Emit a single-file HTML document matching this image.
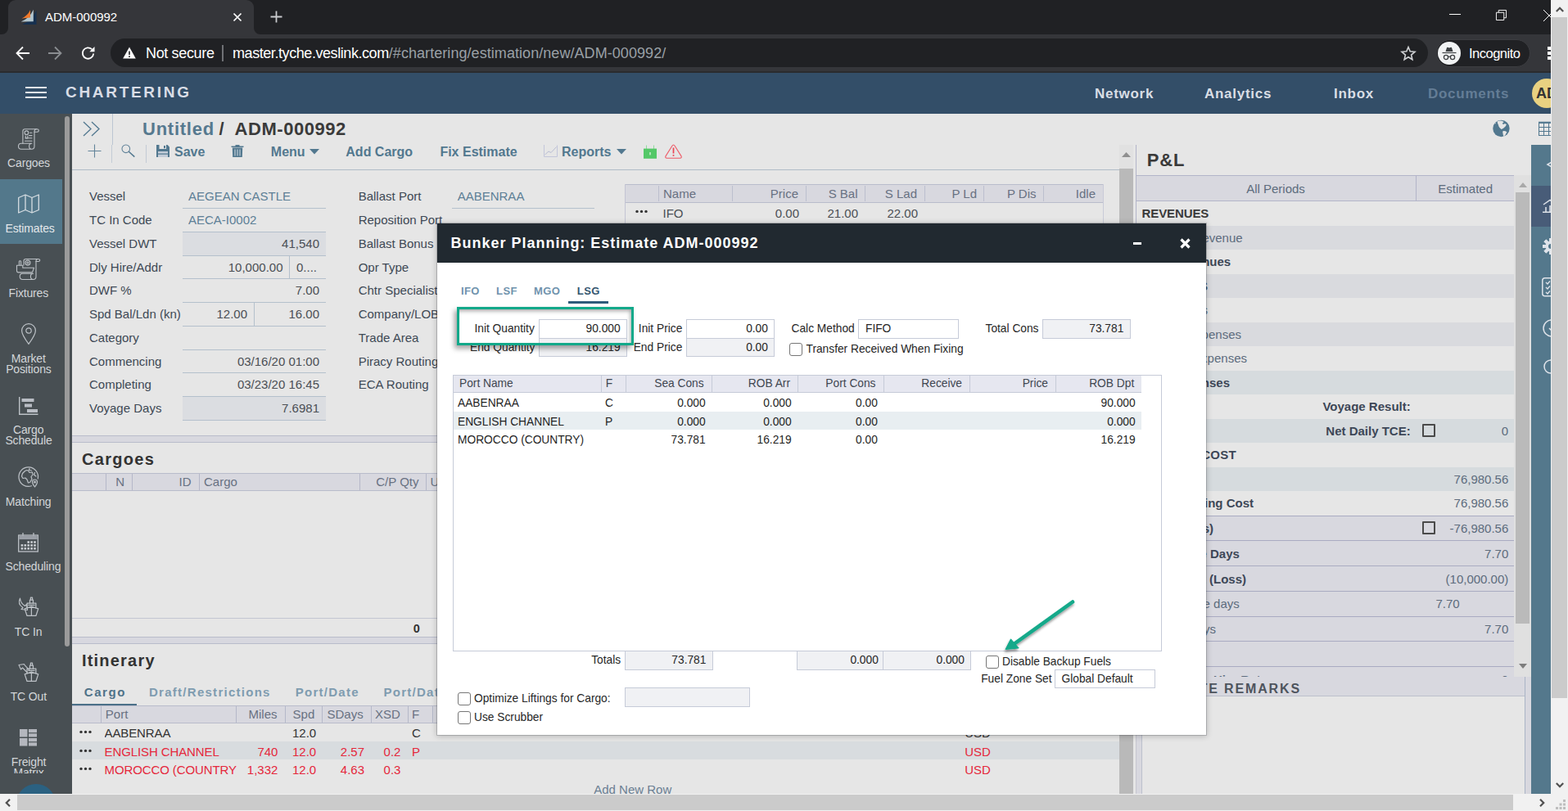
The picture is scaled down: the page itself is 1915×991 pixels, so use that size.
<!DOCTYPE html>
<html><head><meta charset="utf-8"><title>ADM-000992</title>
<style>
*{box-sizing:border-box;margin:0;padding:0}
html,body{width:1915px;height:991px;overflow:hidden;background:#e6e6e6;font-family:"Liberation Sans",Arial,sans-serif;font-size:15px;color:#333}
#root{position:relative;width:1915px;height:991px;overflow:hidden}
.a{position:absolute;white-space:nowrap}
.t{position:absolute;white-space:nowrap;line-height:20px;height:20px}
.r{text-align:right}
.c{text-align:center}
.b{font-weight:bold}
svg{position:absolute;overflow:visible}
/* browser chrome */
#tabbar{left:0;top:0;width:1915px;height:42px;background:#202124}
#tab{left:10px;top:0;width:300px;height:42px;background:#35363a;border-radius:9px 9px 0 0}
#tool{left:0;top:42px;width:1915px;height:46px;background:#35363a}
#toolln{left:0;top:87px;width:1915px;height:2px;background:#2a2b2e}
#url{left:135px;top:47px;width:1609px;height:35px;border-radius:18px;background:#202124}
#incog{left:1754px;top:48px;width:115px;height:34px;border-radius:17px;background:#202124;border:1px solid #3c3d41}
.ch{color:#fff;font-size:18px;letter-spacing:-0.5px}
/* app header */
#hdr{left:0;top:89px;width:1894px;height:50px;background:#334e68}
.nav{color:#d9dee5;font-weight:bold;font-size:17px;letter-spacing:0.72px}
/* sidebar */

.sl{color:#d0d3d6;font-size:14px;text-align:center;width:76px;left:0;line-height:13px;position:absolute;letter-spacing:-0.1px}
.si{stroke:#c4c8cc;fill:none;stroke-width:1.3}
/* main */
.lb{color:#3d4852;font-size:15px}
.ln{position:absolute;height:1px;background:#b9c3ce}
.vl{position:absolute;width:1px;background:#b9c3ce}
.tb{color:#4a6f8c;font-weight:bold;font-size:16px}
.gh{position:absolute;background:#d8d8e0;border-top:1px solid #b9bccd;border-bottom:1px solid #b9bccd}
.red{color:#e0303a}
/* dialog */
#dlg{left:534px;top:273px;width:939px;height:624px;background:#fff;box-shadow:0 1px 6px rgba(0,0,0,.45)}
#dlgh{left:0;top:0;width:939px;height:48px;background:#212930}
.d{font-size:14px;color:#222}
.in{position:absolute;height:23px;border:1px solid #c3c7d6;background:#fff;font-size:14px;line-height:21px;color:#222;padding:0 9px}
.ro{background:#f0f1f4}
.cb{position:absolute;width:15px;height:15px;border:1px solid #6b6b6b;border-radius:3px;background:#fff}
.dh{position:absolute;top:0;height:18px;background:#e6e7f0;border-right:1px solid #c3c7d6;font-size:14px;line-height:17px;color:#444;padding:0 8px}
</style></head><body><div id="root">
<!-- BROWSER CHROME -->
<div class="a" id="tabbar"></div>
<div class="a" id="tab"></div>
<svg style="left:2px;top:34px" width="8" height="8"><path d="M8 0 V8 H0 A8 8 0 0 0 8 0Z" fill="#35363a"/></svg>
<svg style="left:310px;top:34px" width="8" height="8"><path d="M0 0 V8 H8 A8 8 0 0 1 0 0Z" fill="#35363a"/></svg>
<svg style="left:26px;top:11px" width="19" height="20" viewBox="0 0 19 20">
 <path d="M1.100 19 Q13 14 18.500 1.600 V19 Z" fill="#16304f"/>
 <path d="M-0.400 15.600 Q10 11.500 14.800 0.800 V15.200 Z" fill="#b3c5cc"/>
 <path d="M0.400 11.400 Q7.500 8.500 11 1.200 V10.600 Z" fill="#f0792b"/>
</svg>
<div class="t" style="left:55px;top:11px;color:#fff;font-size:15px;letter-spacing:-0.02px">ADM-000992</div>
<svg style="left:284px;top:15px" width="12" height="12" viewBox="0 0 12 12"><path d="M1.5 1.5 L10.5 10.5 M10.5 1.5 L1.5 10.5" stroke="#fff" stroke-width="1.7" fill="none"/></svg>
<svg style="left:330px;top:13px" width="15" height="15" viewBox="0 0 15 15"><path d="M7.5 0.5 V14.5 M0.5 7.5 H14.5" stroke="#c9cbce" stroke-width="1.8" fill="none"/></svg>
<svg style="left:1770px;top:17px" width="14" height="2"><path d="M0 0.5 H14" stroke="#fff" stroke-width="1"/></svg>
<svg style="left:1827px;top:12px" width="13" height="13" viewBox="0 0 14 14"><path d="M0.5 3.5 H10.5 V13.5 H0.5 Z M3.5 3.5 V0.5 H13.5 V10.5 H10.5" stroke="#fff" stroke-width="1" fill="none"/></svg>
<svg style="left:1885px;top:12px" width="14" height="14" viewBox="0 0 14 14"><path d="M0 0 L14 14 M14 0 L0 14" stroke="#fff" stroke-width="1" fill="none"/></svg>
<div class="a" id="tool"></div>
<div class="a" id="toolln"></div>
<svg style="left:19px;top:56px" width="18" height="18" viewBox="0 0 18 18"><path d="M17 9 H2 M9 1.5 L1.5 9 L9 16.5" stroke="#fff" stroke-width="1.8" fill="none"/></svg>
<svg style="left:58px;top:56px" width="18" height="18" viewBox="0 0 18 18"><path d="M1 9 H16 M9 1.5 L16.5 9 L9 16.5" stroke="#8a8d91" stroke-width="1.8" fill="none"/></svg>
<svg style="left:99px;top:56px" width="18" height="18" viewBox="0 0 18 18"><path d="M15.2 9.5 A6.7 6.7 0 1 1 13.2 4.2" stroke="#fff" stroke-width="1.8" fill="none"/><path d="M16.5 1 V7.2 H10.3 Z" fill="#fff"/></svg>
<div class="a" id="url"></div>
<svg style="left:150px;top:57px" width="16" height="15" viewBox="0 0 16 15"><path d="M8 0.5 L15.8 14.5 H0.2 Z" fill="#fff"/><path d="M8 5.5 V10 M8 11.3 V13" stroke="#202124" stroke-width="1.6"/></svg>
<div class="t ch" style="left:178px;top:55px;letter-spacing:-0.35px">Not secure</div>
<div class="a" style="left:271px;top:55px;width:2px;height:20px;background:#6f7175"></div>
<div class="t ch" style="left:284px;top:55px;letter-spacing:-0.43px">master.tyche.veslink.com<span style="color:#9aa0a6;letter-spacing:0.06px">/#chartering/estimation/new/ADM-000992/</span></div>
<svg style="left:1711px;top:56px" width="18" height="18" viewBox="0 0 18 18"><path d="M9 1.5 L11.2 6.8 L17 7.3 L12.6 11.1 L13.9 16.7 L9 13.7 L4.1 16.7 L5.4 11.1 L1 7.3 L6.8 6.8 Z" stroke="#d0d2d5" stroke-width="1.6" fill="none" stroke-linejoin="miter"/></svg>
<div class="a" id="incog"></div>
<div class="a" style="left:1756px;top:51px;width:28px;height:28px;border-radius:14px;background:#f1f3f4"></div>
<svg style="left:1760px;top:57px" width="20" height="18" viewBox="0 0 20 18">
 <path d="M5.5 6 L7 1.2 Q7.3 0.5 8 0.8 L10 1.5 L12 0.8 Q12.7 0.5 13 1.2 L14.5 6 Z" fill="#3c4043"/>
 <path d="M1.5 7.5 H18.500" stroke="#3c4043" stroke-width="1.2"/>
 <circle cx="6" cy="13" r="2.6" stroke="#3c4043" stroke-width="1.3" fill="none"/>
 <circle cx="14" cy="13" r="2.6" stroke="#3c4043" stroke-width="1.3" fill="none"/>
 <path d="M8.6 12.6 Q10 11.8 11.4 12.600" stroke="#3c4043" stroke-width="1.2" fill="none"/>
</svg>
<div class="t" style="left:1794px;top:55px;color:#fff;font-size:16.5px;letter-spacing:-0.5px">Incognito</div>
<div class="a" style="left:1890px;top:57px;width:4px;height:4px;background:#fff;box-shadow:0 6px 0 #fff,0 12px 0 #fff"></div>
<!-- APP HEADER -->
<div class="a" id="hdr"></div>
<div class="a" style="left:31px;top:106px;width:26px;height:2px;background:#e8eaee;box-shadow:0 6px 0 #e8eaee,0 12px 0 #e8eaee"></div>
<div class="t b" style="left:80px;top:103px;color:#d9dde6;font-size:19px;letter-spacing:2.7px">CHARTERING</div>
<div class="t nav" style="left:1337px;top:105px">Network</div>
<div class="t nav" style="left:1471px;top:105px">Analytics</div>
<div class="t nav" style="left:1629px;top:105px">Inbox</div>
<div class="t nav" style="left:1744px;top:105px;color:#647d96">Documents</div>
<div class="a" style="left:1871px;top:96px;width:36px;height:36px;border-radius:18px;background:#e8d181"></div>
<div class="t b" style="left:1876px;top:104px;color:#333;font-size:18px">AD</div>
<!-- SIDEBAR -->
<div class="a" style="left:0px;top:139px;width:88px;height:831px;background:#484f53;"></div>
<div class="a" style="left:0px;top:219px;width:76px;height:79px;background:#53788b;"></div>
<div class="a" style="left:79px;top:142px;width:6px;height:648px;background:#9b9b9b;border-radius:3px;"></div>
<svg style="left:22px;top:157px" width="26" height="26" viewBox="0 0 26 26"><g stroke="#bcc1c6" stroke-width="1.1" fill="none" stroke-linejoin="round" stroke-linecap="round">
<path d="M5.9 18.300 V3.200 Q5.9 0.700 8.400 0.700 H22.800 Q25.300 0.700 25.300 2.600 Q25.300 4.300 23.500 4.300 H20"/>
<path d="M22.800 0.700 Q20 0.700 20 3.500 V21.800 Q20 25.300 16.500 25.300 H3.900 Q0.500 25.300 0.500 21.800 Q0.500 18.300 3.900 18.300 H16.800 Q13.600 18.300 13.600 21.800 Q13.600 25.300 16.800 25.300"/>
<circle cx="10.400" cy="5.200" r="2.300"/><path d="M14.500 5.200 H17 M13.500 8.600 H17 M9 11.800 H17 M8.500 15.300 H17"/><path d="M9.300 9 V12 H11.800 V9"/></g></svg>
<div class="t" style="top:189px;font-size:14px;left:-265px;width:600px;text-align:center;color:#d3d6d9;letter-spacing:-0.15px;">Cargoes</div>
<svg style="left:22px;top:237px" width="26" height="24" viewBox="0 0 26 24"><g stroke="#d6dde2" stroke-width="1.3" fill="none" stroke-linejoin="round"><path d="M0.7 4.5 L9 1 L17 4.5 L25.3 1 V19.5 L17 23 L9 19.5 L0.7 23 Z"/><path d="M9 1 V19.5 M17 4.5 V23"/></g></svg>
<div class="t" style="top:269px;font-size:14px;left:6.5px;color:#e3e7ea;letter-spacing:-0.15px;">Estimates</div>
<svg style="left:20px;top:316px" width="29" height="26" viewBox="0 0 29 26"><g stroke="#bcc1c6" stroke-width="1.1" fill="none" stroke-linejoin="round" stroke-linecap="round">
<path d="M9 8 V3 Q9 0.500 11.500 0.500 H26.300 Q28.700 0.500 28.700 2 Q28.700 3.500 27 3.500 H24"/>
<path d="M26.300 0.500 Q24 0.500 24 3 V22 Q24 25.500 20.500 25.500 H7.600 Q4.200 25.500 4.200 21.800 Q4.200 18.200 7.600 18.200 H20.600 Q17.400 18.200 17.400 21.800 Q17.400 25.500 20.600 25.500"/>
<circle cx="13.900" cy="5.100" r="3"/><circle cx="13.900" cy="5.100" r="1.100"/>
<path d="M3.400 8 V3.200 Q3.400 2.800 4.500 2.800 Q5.600 2.800 5.600 3.400 V8"/><path d="M0.500 8.200 H7.800 V11.300 H21.500 L19.500 16.900 H2.500 Q0.500 16.900 0.500 14.500 Z"/></g></svg>
<div class="t" style="top:348px;font-size:14px;left:-265.2px;width:600px;text-align:center;color:#d3d6d9;letter-spacing:-0.15px;">Fixtures</div>
<svg style="left:26px;top:395px" width="18" height="26" viewBox="0 0 18 26"><g stroke="#bcc1c6" stroke-width="1.2" fill="none"><path d="M9 25.3 Q0.6 14 0.6 9 A8.4 8.4 0 0 1 17.4 9 Q17.4 14 9 25.300 Z"/><circle cx="9" cy="9" r="3.2"/></g></svg>
<div class="t" style="top:428px;font-size:14px;left:-265.3px;width:600px;text-align:center;color:#d3d6d9;letter-spacing:-0.15px;">Market</div>
<div class="t" style="top:441px;font-size:14px;left:-265.1px;width:600px;text-align:center;color:#d3d6d9;letter-spacing:-0.15px;">Positions</div>
<svg style="left:23px;top:485px" width="24" height="22" viewBox="0 0 24 22"><path d="M0.7 0 V21.3 H23.500" stroke="#bcc1c6" stroke-width="1.4" fill="none"/><rect x="3.5" y="2" width="15" height="4" fill="#b9bdc4"/><rect x="7" y="8.5" width="9" height="4" fill="#b9bdc4"/><rect x="10" y="15" width="13" height="4" fill="#b9bdc4"/></svg>
<div class="t" style="top:515px;font-size:14px;left:-265.3px;width:600px;text-align:center;color:#d3d6d9;letter-spacing:-0.15px;">Cargo</div>
<div class="t" style="top:528px;font-size:14px;left:-265px;width:600px;text-align:center;color:#d3d6d9;letter-spacing:-0.15px;">Schedule</div>
<svg style="left:22px;top:571px" width="25" height="25" viewBox="0 0 25 25"><g stroke="#bcc1c6" stroke-width="1.2" fill="none" stroke-linejoin="round" stroke-linecap="round">
<path d="M16.5 22.8 A11.8 11.8 0 1 1 24.300 14"/>
<path d="M8 5 Q10 3 12.5 4 L14 6.5 L17.5 6 L18 9 L16 11.5 L17 14.5 L14.5 18.5 L12.500 19 L11 15 L9 13 L6 13.5 L4.5 11 L5.500 7.500 Z"/>
<path d="M14 1.500 L13.500 3.500 L16.500 4 M20.5 6.5 L19.500 9 L22 11"/>
<path d="M20.5 24 Q17.500 20 17.500 18 A3 3 0 0 1 23.500 18 Q23.5 20 20.500 24 Z"/><circle cx="20.5" cy="18" r="0.9"/></g></svg>
<div class="t" style="top:603px;font-size:14px;left:-265.4px;width:600px;text-align:center;color:#d3d6d9;letter-spacing:-0.15px;">Matching</div>
<svg style="left:22px;top:651px" width="25" height="24" viewBox="0 0 25 24"><g stroke="#bcc1c6" stroke-width="1.3" fill="none"><rect x="0.7" y="3" width="23.600" height="20" /><path d="M6 0 V5.500 M19 0 V5.500"/></g><rect x="1.3" y="3.600" width="22.400" height="4.500" fill="#9a9fa6"/><rect x="11.4" y="10.2" width="2.600" height="2.600" fill="#c9cdd1"/><rect x="15.3" y="10.2" width="2.600" height="2.600" fill="#c9cdd1"/><rect x="19.2" y="10.2" width="2.600" height="2.600" fill="#c9cdd1"/><rect x="3.6" y="14.1" width="2.600" height="2.600" fill="#c9cdd1"/><rect x="7.5" y="14.1" width="2.600" height="2.600" fill="#c9cdd1"/><rect x="11.4" y="14.1" width="2.600" height="2.600" fill="#c9cdd1"/><rect x="15.3" y="14.1" width="2.600" height="2.600" fill="#c9cdd1"/><rect x="19.2" y="14.1" width="2.600" height="2.600" fill="#c9cdd1"/><rect x="3.6" y="18.0" width="2.600" height="2.600" fill="#c9cdd1"/><rect x="7.5" y="18.0" width="2.600" height="2.600" fill="#c9cdd1"/><rect x="11.4" y="18.0" width="2.600" height="2.600" fill="#c9cdd1"/><rect x="15.3" y="18.0" width="2.600" height="2.600" fill="#c9cdd1"/><rect x="19.2" y="18.0" width="2.600" height="2.600" fill="#c9cdd1"/></svg>
<div class="t" style="top:682px;font-size:14px;left:6.5px;color:#d3d6d9;letter-spacing:-0.15px;">Scheduling</div>
<svg style="left:22px;top:730px" width="25" height="24" viewBox="0 0 25 24"><g stroke="#bcc1c6" stroke-width="1.1" fill="none" stroke-linejoin="round" stroke-linecap="round">
<g transform="translate(-3.2,-3.2) scale(1.14)"><path d="M10 15 L12.5 22.500 H22 L24.500 15 L17.2 12.500 Z M17.2 12.5 V22.500"/>
<path d="M12.5 14 V9 H22 V14"/><path d="M15.5 9 V5.500 H19 V9 M16.300 5.500 V3 H18.200 V5.500"/><path d="M14 11 H20.500"/></g><path d="M2.5 1 Q-1 8 6 12.500 L4 14.500 L11.500 15.500 L10.500 8.500 L8.500 10.500 Q3 7 2.500 1 Z"/></g></svg>
<div class="t" style="top:762px;font-size:14px;left:-265.4px;width:600px;text-align:center;color:#d3d6d9;letter-spacing:-0.15px;">TC In</div>
<svg style="left:22px;top:810px" width="25" height="24" viewBox="0 0 25 24"><g stroke="#bcc1c6" stroke-width="1.1" fill="none" stroke-linejoin="round" stroke-linecap="round">
<g transform="translate(-3.2,-3.2) scale(1.14)"><path d="M10 15 L12.5 22.500 H22 L24.500 15 L17.2 12.500 Z M17.2 12.5 V22.500"/>
<path d="M12.5 14 V9 H22 V14"/><path d="M15.5 9 V5.500 H19 V9 M16.300 5.500 V3 H18.200 V5.500"/><path d="M14 11 H20.500"/></g><path d="M11 11.500 L5.500 6 L3.500 8 L1 2.500 L7.500 1.500 L8.500 3.200 L13.500 8.500"/></g></svg>
<div class="t" style="top:841px;font-size:14px;left:-265.2px;width:600px;text-align:center;color:#d3d6d9;letter-spacing:-0.15px;">TC Out</div>
<svg style="left:24px;top:891px" width="21" height="21" viewBox="0 0 21 21"><rect x="0" y="0" width="9.500" height="9.500" fill="#b4b7be"/><rect x="0" y="11" width="9.500" height="9.500" fill="#b4b7be"/><rect x="11" y="0" width="10" height="4.200" fill="#b4b7be"/><rect x="11" y="5.3" width="10" height="4.200" fill="#b4b7be"/><rect x="11" y="11" width="10" height="4.200" fill="#b4b7be"/><rect x="11" y="16.3" width="10" height="4.200" fill="#b4b7be"/></svg>
<div class="t" style="top:921px;font-size:14px;left:-265px;width:600px;text-align:center;color:#d3d6d9;letter-spacing:-0.15px;">Freight</div>
<div class="a" style="left:0;top:939px;width:76px;height:6px;overflow:hidden"><div class="t" style="top:-5px;font-size:14px;left:-265px;width:600px;text-align:center;color:#d3d6d9;letter-spacing:-0.15px;">Matrix</div>
</div>
<div class="a" style="left:20px;top:958px;width:48px;height:12px;overflow:hidden"><div class="a" style="left:0;top:0;width:48px;height:48px;border-radius:24px;background:#2b6181"></div></div>
<!-- MAIN PANEL -->
<svg style="left:101px;top:148px" width="22" height="19" viewBox="0 0 22 19"><path d="M1 1 L10 9.500 L1 18 M11 1 L20 9.500 L11 18" stroke="#52788f" stroke-width="1.3" fill="none"/></svg>
<div class="a" style="left:137px;top:139px;width:1px;height:38px;background:#bcc6d2;"></div>
<div class="t" style="top:148px;font-size:22px;left:174px;color:#56798f;font-weight:bold;letter-spacing:0.75px;word-spacing:-1.3px;">Untitled <span style="color:#3a3a3a">/</span></div>
<div class="t" style="top:148px;font-size:22px;left:286.6px;color:#3a3a3a;font-weight:bold;letter-spacing:0.54px;">ADM-000992</div>
<svg style="left:107px;top:176px" width="17" height="17" viewBox="0 0 17 17"><path d="M8.500 0.500 V16.500 M0.500 8.500 H16.500" stroke="#63849a" stroke-width="1.100" fill="none"/></svg>
<div class="a" style="left:136px;top:177px;width:1px;height:22px;background:#c3cbd5;"></div>
<svg style="left:148px;top:176px" width="18" height="17" viewBox="0 0 18 17"><circle cx="5.800" cy="5.800" r="4.800" stroke="#63849a" stroke-width="1.100" fill="none"/><path d="M9.300 9.300 L16.300 15.600" stroke="#52788f" stroke-width="1.500" fill="none"/></svg>
<div class="a" style="left:178px;top:177px;width:1px;height:22px;background:#c3cbd5;"></div>
<svg style="left:191px;top:177px" width="16" height="15" viewBox="0 0 16 15"><path d="M0 0 H13.500 L16 2.500 V15 H0 Z" fill="#52788f"/><rect x="3.500" y="0" width="8.500" height="5" fill="#e6e6e6"/><rect x="9" y="1" width="2" height="3.200" fill="#52788f"/><rect x="2" y="8" width="12" height="7" fill="#c3ccd8"/><rect x="2" y="10.500" width="12" height="1.200" fill="#52788f"/></svg>
<div class="t" style="top:176px;font-size:16px;left:213px;color:#52788f;font-weight:bold;">Save</div>
<svg style="left:282px;top:177px" width="16" height="15" viewBox="0 0 16 15"><path d="M0.500 1.500 H15.500 V3 H0.500 Z M5.500 0 H10.500 V1.500 H5.500 Z M1.800 3.500 H14.200 L13.800 15 H2.200 Z" fill="#52788f"/><path d="M5 5.500 V13.500 M8 5.500 V13.500 M11 5.500 V13.500" stroke="#d5dde5" stroke-width="1"/></svg>
<div class="t" style="top:176px;font-size:16px;left:330.8px;color:#52788f;font-weight:bold;">Menu</div>
<svg style="left:378px;top:182px" width="12" height="7" viewBox="0 0 12 7"><path d="M0 0 H12 L6 6.500 Z" fill="#52788f"/></svg>
<div class="t" style="top:176px;font-size:16px;left:422.3px;color:#52788f;font-weight:bold;">Add Cargo</div>
<div class="t" style="top:176px;font-size:16px;left:537.4px;color:#52788f;font-weight:bold;">Fix Estimate</div>
<svg style="left:664px;top:177px" width="17" height="15" viewBox="0 0 17 15"><path d="M0.500 0 V14.500 H16.500 V0.500" stroke="#c3c6da" stroke-width="1" fill="none"/><path d="M1.500 12 L6 8 L9 9.500 L15.500 2.500" stroke="#b9bdd3" stroke-width="1" fill="none"/></svg>
<div class="t" style="top:176px;font-size:16px;left:686px;color:#52788f;font-weight:bold;">Reports</div>
<svg style="left:753px;top:182px" width="12" height="7" viewBox="0 0 12 7"><path d="M0 0 H12 L6 6.500 Z" fill="#52788f"/></svg>
<svg style="left:786px;top:176px" width="16" height="18" viewBox="0 0 16 18"><path d="M3.500 6 V1.500 M12.500 6 V1.500" stroke="#8fdc9c" stroke-width="1" fill="none"/><rect x="0" y="5.600" width="16" height="12.200" fill="#54c868"/><rect x="7.300" y="10" width="1.400" height="3.400" fill="#d3f0d8"/></svg>
<svg style="left:812px;top:176px" width="21" height="18" viewBox="0 0 21 18"><path d="M8.900 2.200 Q10.500 -0.300 12.100 2.200 L19.900 14.600 Q21.200 17.200 18.400 17.200 H2.600 Q-0.200 17.200 1.100 14.600 Z" stroke="#ee5a67" stroke-width="1.100" fill="none" stroke-linejoin="round"/><path d="M10.500 4.500 V11.500 M10.500 13 V14.800" stroke="#ea4655" stroke-width="1.700"/></svg>
<div class="a" style="left:88px;top:207px;width:1279px;height:1px;background:#b0bcc8;"></div>
<svg style="left:1823px;top:147px" width="21" height="21" viewBox="0 0 21 21"><circle cx="10.450" cy="10" r="10.200" fill="#52788f"/><path d="M5.600 1.200 Q6 4 6.900 5.600 Q7.300 7.800 8.500 9 L10.600 11 L12.200 10.200 L13.700 9.300 L15.800 7.200 L16.900 5.100 L14.800 4.100 L13.200 5.100 L11.600 4.100 L13.700 2 Q10 -0.500 5.600 1.200 Z" fill="#e6e6e6"/><path d="M12.700 13 Q15 12.600 17.400 14.200 L15.800 17.200 L13.600 19.900 L12.700 17.200 L12.200 14.600 Z" fill="#e6e6e6"/><path d="M2.600 3.600 L3.400 4.600 L4.200 3.200 Z" fill="#e6e6e6"/></svg>
<svg style="left:1879px;top:148px" width="17" height="19" viewBox="0 0 17 19"><rect x="0" y="0.700" width="17" height="2.200" fill="#52788f"/><g stroke="#52788f" stroke-width="1" fill="none"><path d="M0.500 1 V18 M6.500 1 V18 M12.500 1 V18 M0 7.500 H17 M0 12.500 H17 M0 17.500 H17"/></g></svg>
<div class="t" style="top:230px;font-size:15px;left:109px;color:#3e4955;letter-spacing:0px;">Vessel</div>
<div class="t" style="top:259px;font-size:15px;left:109px;color:#3e4955;letter-spacing:0px;">TC In Code</div>
<div class="t" style="top:288px;font-size:15px;left:109px;color:#3e4955;letter-spacing:0px;">Vessel DWT</div>
<div class="t" style="top:317px;font-size:15px;left:109px;color:#3e4955;letter-spacing:0px;">Dly Hire/Addr</div>
<div class="t" style="top:345px;font-size:15px;left:109px;color:#3e4955;letter-spacing:0px;">DWF %</div>
<div class="t" style="top:374px;font-size:15px;left:109px;color:#3e4955;letter-spacing:0px;">Spd Bal/Ldn (kn)</div>
<div class="t" style="top:403px;font-size:15px;left:109px;color:#3e4955;letter-spacing:0px;">Category</div>
<div class="t" style="top:432px;font-size:15px;left:109px;color:#3e4955;letter-spacing:0px;">Commencing</div>
<div class="t" style="top:460px;font-size:15px;left:109px;color:#3e4955;letter-spacing:0px;">Completing</div>
<div class="t" style="top:489px;font-size:15px;left:109px;color:#3e4955;letter-spacing:0px;">Voyage Days</div>
<div class="a" style="left:223px;top:284px;width:175px;height:28px;background:#dbdde1;"></div>
<div class="a" style="left:223px;top:485px;width:175px;height:28px;background:#dbdde1;"></div>
<div class="a" style="left:223px;top:254px;width:175px;height:1px;background:#b4c0cc;"></div>
<div class="a" style="left:223px;top:283px;width:175px;height:1px;background:#b4c0cc;"></div>
<div class="a" style="left:223px;top:312px;width:175px;height:1px;background:#b4c0cc;"></div>
<div class="a" style="left:223px;top:340px;width:175px;height:1px;background:#b4c0cc;"></div>
<div class="a" style="left:223px;top:369px;width:175px;height:1px;background:#b4c0cc;"></div>
<div class="a" style="left:223px;top:398px;width:175px;height:1px;background:#b4c0cc;"></div>
<div class="a" style="left:223px;top:427px;width:175px;height:1px;background:#b4c0cc;"></div>
<div class="a" style="left:223px;top:455px;width:175px;height:1px;background:#b4c0cc;"></div>
<div class="a" style="left:223px;top:484px;width:175px;height:1px;background:#b4c0cc;"></div>
<div class="a" style="left:223px;top:513px;width:175px;height:1px;background:#b4c0cc;"></div>
<div class="t" style="top:230px;font-size:15px;left:230px;color:#5d7f96;letter-spacing:0px;">AEGEAN CASTLE</div>
<div class="t" style="top:259px;font-size:15px;left:230px;color:#5d7f96;letter-spacing:0px;">AECA-I0002</div>
<div class="t" style="top:288px;font-size:15px;right:1525px;color:#4b4f55;">41,540</div>
<div class="t" style="top:317px;font-size:15px;right:1569.5px;color:#4b4f55;">10,000.00</div>
<div class="a" style="left:353px;top:313px;width:1px;height:27px;background:#b4c0cc;"></div>
<div class="t" style="top:317px;font-size:15px;left:362px;color:#4b4f55;">0....</div>
<div class="t" style="top:345px;font-size:15px;right:1525px;color:#4b4f55;">7.00</div>
<div class="t" style="top:374px;font-size:15px;right:1613px;color:#4b4f55;">12.00</div>
<div class="a" style="left:310px;top:370px;width:1px;height:28px;background:#b4c0cc;"></div>
<div class="t" style="top:374px;font-size:15px;right:1525px;color:#4b4f55;">16.00</div>
<div class="t" style="top:432px;font-size:15px;right:1525px;color:#4b4f55;">03/16/20 01:00</div>
<div class="t" style="top:460px;font-size:15px;right:1525px;color:#4b4f55;">03/23/20 16:45</div>
<div class="t" style="top:489px;font-size:15px;right:1525px;color:#4b4f55;">7.6981</div>
<div class="t" style="top:230px;font-size:15px;left:437.7px;color:#3e4955;letter-spacing:0px;">Ballast Port</div>
<div class="t" style="top:259px;font-size:15px;left:437.7px;color:#3e4955;letter-spacing:0px;">Reposition Port</div>
<div class="t" style="top:288px;font-size:15px;left:437.7px;color:#3e4955;letter-spacing:0px;">Ballast Bonus</div>
<div class="t" style="top:317px;font-size:15px;left:437.7px;color:#3e4955;letter-spacing:0px;">Opr Type</div>
<div class="t" style="top:345px;font-size:15px;left:437.7px;color:#3e4955;letter-spacing:0px;">Chtr Specialist</div>
<div class="t" style="top:374px;font-size:15px;left:437.7px;color:#3e4955;letter-spacing:0px;">Company/LOB</div>
<div class="t" style="top:403px;font-size:15px;left:437.7px;color:#3e4955;letter-spacing:0px;">Trade Area</div>
<div class="t" style="top:432px;font-size:15px;left:437.7px;color:#3e4955;letter-spacing:0px;">Piracy Routing</div>
<div class="t" style="top:460px;font-size:15px;left:437.7px;color:#3e4955;letter-spacing:0px;">ECA Routing</div>
<div class="t" style="top:230px;font-size:15px;left:558.7px;color:#5d7f96;letter-spacing:0px;">AABENRAA</div>
<div class="a" style="left:552px;top:254px;width:174px;height:1px;background:#b4c0cc;"></div>
<div class="a" style="left:552px;top:283px;width:174px;height:1px;background:#b4c0cc;"></div>
<div class="a" style="left:552px;top:312px;width:174px;height:1px;background:#b4c0cc;"></div>
<div class="a" style="left:552px;top:340px;width:174px;height:1px;background:#b4c0cc;"></div>
<div class="a" style="left:552px;top:369px;width:174px;height:1px;background:#b4c0cc;"></div>
<div class="a" style="left:552px;top:398px;width:174px;height:1px;background:#b4c0cc;"></div>
<div class="a" style="left:552px;top:427px;width:174px;height:1px;background:#b4c0cc;"></div>
<div class="a" style="left:552px;top:455px;width:174px;height:1px;background:#b4c0cc;"></div>
<div class="a" style="left:552px;top:484px;width:174px;height:1px;background:#b4c0cc;"></div>
<div class="a" style="left:764px;top:225px;width:583px;height:23px;background:#d8d8df;border-top:1px solid #b9bccb;border-bottom:1px solid #b9bccb;"></div>
<div class="a" style="left:763px;top:225px;width:1px;height:60px;background:#c3c5d3;"></div>
<div class="a" style="left:1347px;top:225px;width:1px;height:60px;background:#c9cbd8;"></div>
<div class="a" style="left:804px;top:227px;width:1px;height:19px;background:#bcbfce;"></div>
<div class="a" style="left:894px;top:227px;width:1px;height:19px;background:#bcbfce;"></div>
<div class="a" style="left:984px;top:227px;width:1px;height:19px;background:#bcbfce;"></div>
<div class="a" style="left:1056px;top:227px;width:1px;height:19px;background:#bcbfce;"></div>
<div class="a" style="left:1129px;top:227px;width:1px;height:19px;background:#bcbfce;"></div>
<div class="a" style="left:1201px;top:227px;width:1px;height:19px;background:#bcbfce;"></div>
<div class="a" style="left:1274px;top:227px;width:1px;height:19px;background:#bcbfce;"></div>
<div class="t" style="top:227px;font-size:15px;left:810px;color:#687182;">Name</div>
<div class="t" style="top:227px;font-size:15px;right:940px;color:#687182;">Price</div>
<div class="t" style="top:227px;font-size:15px;right:867.5px;color:#687182;">S Bal</div>
<div class="t" style="top:227px;font-size:15px;right:795px;color:#687182;">S Lad</div>
<div class="t" style="top:227px;font-size:15px;right:722px;color:#687182;">P Ld</div>
<div class="t" style="top:227px;font-size:15px;right:649.5px;color:#687182;">P Dis</div>
<div class="t" style="top:227px;font-size:15px;right:577px;color:#687182;">Idle</div>
<svg style="left:776px;top:256px" width="15" height="5" viewBox="0 0 15 5"><circle cx="2" cy="2.400" r="1.700" fill="#333"/><circle cx="7.500" cy="2.400" r="1.700" fill="#333"/><circle cx="13" cy="2.400" r="1.700" fill="#333"/></svg>
<div class="t" style="top:251px;font-size:15px;left:809.5px;color:#4b4f55;">IFO</div>
<div class="t" style="top:251px;font-size:15px;right:939px;color:#4b4f55;">0.00</div>
<div class="t" style="top:251px;font-size:15px;right:867px;color:#4b4f55;">21.00</div>
<div class="t" style="top:251px;font-size:15px;right:794px;color:#4b4f55;">22.00</div>
<div class="a" style="left:1367px;top:177px;width:17px;height:793px;background:#e1e1e1;"></div>
<div class="a" style="left:1367px;top:206px;width:17px;height:764px;background:#b9b9b9;"></div>
<svg style="left:1370px;top:186px" width="11" height="6" viewBox="0 0 11 6"><path d="M0 6 L5.500 0 L11 6 Z" fill="#8f8f8f"/></svg>
<div class="a" style="left:1385px;top:177px;width:3px;height:793px;background:#e6e6e6;"></div>
<div class="a" style="left:88px;top:532px;width:1279px;height:9px;background:#d8d8df;border-top:1px solid #b9bccb;border-bottom:1px solid #b9bccb;"></div>
<div class="t" style="top:551px;font-size:20px;left:100px;color:#333;font-weight:bold;letter-spacing:1.3px;">Cargoes</div>
<div class="a" style="left:88px;top:578px;width:1279px;height:22px;background:#d8d8df;border-top:1px solid #b9bccb;border-bottom:1px solid #b9bccb;"></div>
<div class="a" style="left:129px;top:579px;width:1px;height:20px;background:#b5b8c9;"></div>
<div class="a" style="left:161px;top:579px;width:1px;height:20px;background:#b5b8c9;"></div>
<div class="a" style="left:243px;top:579px;width:1px;height:20px;background:#b5b8c9;"></div>
<div class="a" style="left:439px;top:579px;width:1px;height:20px;background:#b5b8c9;"></div>
<div class="a" style="left:520px;top:579px;width:1px;height:20px;background:#b5b8c9;"></div>
<div class="t" style="top:579px;font-size:15px;left:-153.4px;width:600px;text-align:center;color:#687182;">N</div>
<div class="t" style="top:579px;font-size:15px;right:1681.5px;color:#687182;">ID</div>
<div class="t" style="top:579px;font-size:15px;left:249px;color:#687182;">Cargo</div>
<div class="t" style="top:579px;font-size:15px;right:1403.5px;color:#687182;">C/P Qty</div>
<div class="t" style="top:579px;font-size:15px;left:525.5px;color:#687182;">U</div>
<div class="a" style="left:88px;top:755px;width:1279px;height:1px;background:#c3c6d2;"></div>
<div class="t" style="top:758px;font-size:14.5px;right:1402.3px;color:#333;font-weight:bold;">0</div>
<div class="a" style="left:88px;top:778px;width:1279px;height:9px;background:#d8d8df;border-top:1px solid #b9bccb;border-bottom:1px solid #b9bccb;"></div>
<div class="t" style="top:797px;font-size:20px;left:100px;color:#333;font-weight:bold;letter-spacing:1.2px;">Itinerary</div>
<div class="t" style="top:836px;font-size:15px;left:102.8px;color:#4f7289;font-weight:bold;letter-spacing:1.55px;">Cargo</div>
<div class="t" style="top:836px;font-size:15px;left:182px;color:#7f9cb0;font-weight:bold;letter-spacing:1.27px;">Draft/Restrictions</div>
<div class="t" style="top:836px;font-size:15px;left:360.8px;color:#7f9cb0;font-weight:bold;letter-spacing:1.25px;">Port/Date</div>
<div class="t" style="top:836px;font-size:15px;left:468.6px;color:#7f9cb0;font-weight:bold;letter-spacing:1.25px;">Port/Date</div>
<div class="a" style="left:88px;top:860px;width:79px;height:2px;background:#4b7088;"></div>
<div class="a" style="left:88px;top:862px;width:1279px;height:22px;background:#d8d8df;border-top:1px solid #b9bccb;border-bottom:1px solid #b9bccb;"></div>
<div class="a" style="left:123px;top:863px;width:1px;height:20px;background:#b5b8c9;"></div>
<div class="a" style="left:288px;top:863px;width:1px;height:20px;background:#b5b8c9;"></div>
<div class="a" style="left:348px;top:863px;width:1px;height:20px;background:#b5b8c9;"></div>
<div class="a" style="left:393px;top:863px;width:1px;height:20px;background:#b5b8c9;"></div>
<div class="a" style="left:453px;top:863px;width:1px;height:20px;background:#b5b8c9;"></div>
<div class="a" style="left:498px;top:863px;width:1px;height:20px;background:#b5b8c9;"></div>
<div class="a" style="left:528px;top:863px;width:1px;height:20px;background:#b5b8c9;"></div>
<div class="t" style="top:863px;font-size:15px;left:128.8px;color:#687182;">Port</div>
<div class="t" style="top:863px;font-size:15px;right:1576.5px;color:#687182;">Miles</div>
<div class="t" style="top:863px;font-size:15px;left:357.6px;color:#687182;">Spd</div>
<div class="t" style="top:863px;font-size:15px;left:399.5px;color:#687182;">SDays</div>
<div class="t" style="top:863px;font-size:15px;left:458px;color:#687182;">XSD</div>
<div class="t" style="top:863px;font-size:15px;left:503px;color:#687182;">F</div>
<div class="a" style="left:88px;top:906px;width:1279px;height:22px;background:#d8dcdf;"></div>
<svg style="left:97px;top:892px" width="15" height="5" viewBox="0 0 15 5"><circle cx="2" cy="2.400" r="1.700" fill="#333"/><circle cx="7.500" cy="2.400" r="1.700" fill="#333"/><circle cx="13" cy="2.400" r="1.700" fill="#333"/></svg>
<div class="a" style="left:127.500px;top:884px;width:161px;height:24px;overflow:hidden"><div class="t" style="top:2px;font-size:15px;left:0px;color:#333;letter-spacing:-0.1px;">AABENRAA</div>
</div>
<div class="t" style="top:886px;font-size:15px;left:357px;color:#333;">12.0</div>
<div class="t" style="top:886px;font-size:15px;left:503px;color:#333;">C</div>
<div class="t" style="top:886px;font-size:15px;left:1178.2px;color:#333;">USD</div>
<svg style="left:97px;top:915px" width="15" height="5" viewBox="0 0 15 5"><circle cx="2" cy="2.400" r="1.700" fill="#333"/><circle cx="7.500" cy="2.400" r="1.700" fill="#333"/><circle cx="13" cy="2.400" r="1.700" fill="#333"/></svg>
<div class="a" style="left:127.500px;top:907px;width:161px;height:24px;overflow:hidden"><div class="t" style="top:2px;font-size:15px;left:0px;color:#e5283c;letter-spacing:-0.1px;">ENGLISH CHANNEL</div>
</div>
<div class="t" style="top:909px;font-size:15px;right:1575.6px;color:#e5283c;">740</div>
<div class="t" style="top:909px;font-size:15px;left:357px;color:#e5283c;">12.0</div>
<div class="t" style="top:909px;font-size:15px;right:1470px;color:#e5283c;">2.57</div>
<div class="t" style="top:909px;font-size:15px;right:1425.6px;color:#e5283c;">0.2</div>
<div class="t" style="top:909px;font-size:15px;left:503px;color:#e5283c;">P</div>
<div class="t" style="top:909px;font-size:15px;left:1178.2px;color:#e5283c;">USD</div>
<svg style="left:97px;top:937px" width="15" height="5" viewBox="0 0 15 5"><circle cx="2" cy="2.400" r="1.700" fill="#333"/><circle cx="7.500" cy="2.400" r="1.700" fill="#333"/><circle cx="13" cy="2.400" r="1.700" fill="#333"/></svg>
<div class="a" style="left:127.500px;top:929px;width:161px;height:24px;overflow:hidden"><div class="t" style="top:2px;font-size:15px;left:0px;color:#e5283c;letter-spacing:-0.1px;">MOROCCO (COUNTRY)</div>
</div>
<div class="t" style="top:931px;font-size:15px;right:1575.6px;color:#e5283c;">1,332</div>
<div class="t" style="top:931px;font-size:15px;left:357px;color:#e5283c;">12.0</div>
<div class="t" style="top:931px;font-size:15px;right:1470px;color:#e5283c;">4.63</div>
<div class="t" style="top:931px;font-size:15px;right:1425.6px;color:#e5283c;">0.3</div>
<div class="t" style="top:931px;font-size:15px;left:1178.2px;color:#e5283c;">USD</div>
<div class="t" style="top:955px;font-size:15px;left:725.2px;color:#6b7f93;">Add New Row</div>
<!-- P&L PANEL -->
<div class="a" style="left:1387px;top:177px;width:1px;height:650px;background:#b3b5c9;"></div>
<div class="a" style="left:1387px;top:827px;width:1px;height:143px;background:#c6c6cf;"></div>
<div class="t" style="top:186px;font-size:22px;left:1400.7px;color:#3a3a3a;font-weight:bold;letter-spacing:0.9px;">P&amp;L</div>
<div class="a" style="left:1388px;top:214px;width:461px;height:32px;background:#d8d8df;border-top:1px solid #b3b5c9;border-bottom:1px solid #b3b5c9;"></div>
<div class="a" style="left:1729px;top:215px;width:1px;height:30px;background:#b3b5c9;"></div>
<div class="t" style="top:221px;font-size:15px;left:1258px;width:600px;text-align:center;color:#5d6c7d;">All Periods</div>
<div class="t" style="top:221px;font-size:15px;left:1489.7px;width:600px;text-align:center;color:#5d6c7d;">Estimated</div>
<div class="t" style="top:251px;font-size:15px;left:1394.5px;color:#3a3a3a;font-weight:bold;letter-spacing:-0.1px;">REVENUES</div>
<div class="a" style="left:1388px;top:276px;width:461px;height:29px;background:#d9dade;"></div>
<div class="a" style="left:1388px;top:335px;width:461px;height:29px;background:#d9dade;"></div>
<div class="a" style="left:1388px;top:394px;width:461px;height:29px;background:#d9dade;"></div>
<div class="a" style="left:1388px;top:453px;width:461px;height:29px;background:#d6dbde;"></div>
<div class="a" style="left:1388px;top:512px;width:461px;height:29px;background:#d6dbde;"></div>
<div class="a" style="left:1388px;top:571px;width:461px;height:29px;background:#d6dbde;"></div>
<div class="t" style="top:281px;font-size:15px;right:397.4px;color:#5d6c7d;">Freight Revenue</div>
<div class="t" style="top:310px;font-size:15px;right:411.8px;color:#3d4757;font-weight:bold;">Total Revenues</div>
<div class="t" style="top:340px;font-size:15px;right:440px;color:#3d4757;font-weight:bold;">EXPENSES</div>
<div class="t" style="top:369px;font-size:15px;right:440px;color:#5d6c7d;">Bunkers</div>
<div class="t" style="top:399px;font-size:15px;right:399px;color:#5d6c7d;">Port Expenses</div>
<div class="t" style="top:428px;font-size:15px;right:392px;color:#5d6c7d;">Misc. Expenses</div>
<div class="t" style="top:458px;font-size:15px;right:413px;color:#3d4757;font-weight:bold;">Total Expenses</div>
<div class="t" style="top:487px;font-size:15px;right:192.3px;color:#3d4757;font-weight:bold;">Voyage Result:</div>
<div class="t" style="top:517px;font-size:15px;right:192.3px;color:#3d4757;font-weight:bold;">Net Daily TCE:</div>
<div class="t" style="top:546px;font-size:15px;right:405px;color:#3d4757;font-weight:bold;letter-spacing:0.3px;">RUNNING COST</div>
<div class="t" style="top:605px;font-size:15px;right:384px;color:#3d4757;font-weight:bold;">Total Running Cost</div>
<div class="a" style="left:1737px;top:518px;width:16px;height:16px;border:2px solid #4a4a4a;border-radius:1px;"></div>
<div class="t" style="top:517px;font-size:15px;right:72.8px;color:#5d6c7d;">0</div>
<div class="t" style="top:576px;font-size:15px;right:72.7px;color:#5d6c7d;">76,980.56</div>
<div class="t" style="top:605px;font-size:15px;right:72.7px;color:#5d6c7d;">76,980.56</div>
<div class="a" style="left:1388px;top:630px;width:461px;height:197px;background:#d8d8df;"></div>
<div class="a" style="left:1388px;top:630px;width:461px;height:1px;background:#a9abc2;"></div>
<div class="a" style="left:1388px;top:660px;width:461px;height:1px;background:#a9abc2;"></div>
<div class="a" style="left:1388px;top:691px;width:461px;height:1px;background:#a9abc2;"></div>
<div class="a" style="left:1388px;top:722px;width:461px;height:1px;background:#a9abc2;"></div>
<div class="a" style="left:1388px;top:753px;width:461px;height:1px;background:#a9abc2;"></div>
<div class="a" style="left:1388px;top:783px;width:461px;height:1px;background:#a9abc2;"></div>
<div class="a" style="left:1388px;top:814px;width:461px;height:1px;background:#a9abc2;"></div>
<div class="t" style="top:636px;font-size:15px;right:433px;color:#3d4757;font-weight:bold;">Profit (Loss)</div>
<div class="a" style="left:1737px;top:637px;width:16px;height:16px;border:2px solid #4a4a4a;border-radius:1px;"></div>
<div class="t" style="top:636px;font-size:15px;right:72.7px;color:#5d6c7d;">-76,980.56</div>
<div class="t" style="top:667px;font-size:15px;right:401.2px;color:#3d4757;font-weight:bold;">Total Voyage Days</div>
<div class="t" style="top:667px;font-size:15px;right:72.7px;color:#5d6c7d;">7.70</div>
<div class="t" style="top:698px;font-size:15px;right:393px;color:#3d4757;font-weight:bold;">Daily Profit (Loss)</div>
<div class="t" style="top:698px;font-size:15px;right:72.7px;color:#5d6c7d;">(10,000.00)</div>
<div class="t" style="top:728px;font-size:15px;right:401.2px;color:#5d6c7d;">Breakeven Voyage days</div>
<div class="t" style="top:728px;font-size:15px;right:132.3px;color:#5d6c7d;">7.70</div>
<div class="t" style="top:759px;font-size:15px;right:430px;color:#5d6c7d;">Voyage Days</div>
<div class="t" style="top:759px;font-size:15px;right:72.7px;color:#5d6c7d;">7.70</div>
<div class="a" style="left:1388px;top:815px;width:461px;height:11.500px;overflow:hidden"><div class="t" style="top:6px;font-size:15px;left:94px;color:#5d6c7d;font-weight:bold">Hire Rate</div><div class="t" style="top:6px;font-size:15px;right:7px;color:#5d6c7d">0</div></div>
<div class="a" style="left:1849px;top:214px;width:21px;height:613px;background:#e0e0e0;"></div>
<div class="a" style="left:1851px;top:235px;width:17px;height:527px;background:#bababa;"></div>
<svg style="left:1855px;top:223px" width="10" height="6" viewBox="0 0 10 6"><path d="M0 6 L5 0 L10 6 Z" fill="#a9a9a9"/></svg>
<svg style="left:1855px;top:811px" width="10" height="6" viewBox="0 0 10 6"><path d="M0 0 L5 6 L10 0 Z" fill="#7d7d7d"/></svg>
<div class="a" style="left:1388px;top:827px;width:482px;height:143px;background:#d8d8df;"></div>
<div class="t" style="top:832px;font-size:16px;right:326px;color:#4e545d;font-weight:bold;letter-spacing:1.87px;">ESTIMATE REMARKS</div>
<div class="a" style="left:1394px;top:850px;width:469px;height:125px;background:#e6e6e6;border:1px solid #bcc0cc;"></div>
<div class="a" style="left:1862px;top:827px;width:1px;height:143px;background:#aab4c6;"></div>
<div class="a" style="left:1870px;top:177px;width:24px;height:793px;background:#54788c;"></div>
<div class="a" style="left:1870px;top:227px;width:24px;height:50px;background:#485c78;"></div>
<div class="a" style="left:1870px;top:177px;width:24px;height:793px;overflow:hidden"><svg style="left:19px;top:17px" width="12" height="14" viewBox="0 0 12 14"><path d="M11 1 L1 7 L11 13" stroke="#dfe3ea" stroke-width="1.600" fill="none"/></svg>
<svg style="left:14px;top:67px" width="18" height="16" viewBox="0 0 18 16"><path d="M1 6 L9 0.500 L17 6 M0 15.300 H18 M4 15 V9 M9 15 V7 M14 15 V9" stroke="#dfe3ea" stroke-width="1.500" fill="none"/></svg>
<svg style="left:14px;top:114px" width="20" height="20" viewBox="0 0 20 20"><circle cx="10" cy="10" r="6.500" fill="#dfe3ea"/><rect x="8" y="0" width="4" height="20" fill="#dfe3ea" transform="rotate(0 10 10)"/><rect x="8" y="0" width="4" height="20" fill="#dfe3ea" transform="rotate(45 10 10)"/><rect x="8" y="0" width="4" height="20" fill="#dfe3ea" transform="rotate(90 10 10)"/><rect x="8" y="0" width="4" height="20" fill="#dfe3ea" transform="rotate(135 10 10)"/><rect x="8" y="0" width="4" height="20" fill="#dfe3ea" transform="rotate(180 10 10)"/><rect x="8" y="0" width="4" height="20" fill="#dfe3ea" transform="rotate(225 10 10)"/><rect x="8" y="0" width="4" height="20" fill="#dfe3ea" transform="rotate(270 10 10)"/><rect x="8" y="0" width="4" height="20" fill="#dfe3ea" transform="rotate(315 10 10)"/><circle cx="10" cy="10" r="3" fill="#54788c"/></svg>
<svg style="left:13px;top:162px" width="20" height="24" viewBox="0 0 20 24"><rect x="0.800" y="0.800" width="18" height="22" rx="3" stroke="#dfe3ea" stroke-width="1.500" fill="none"/><path d="M5 6 L7 8 L10 4.500 M5 12 L7 14 L10 10.500 M5 18 L7 20 L10 16.500" stroke="#dfe3ea" stroke-width="1.300" fill="none"/></svg>
<svg style="left:13.5px;top:213px" width="22" height="22" viewBox="0 0 22 22"><circle cx="11" cy="11" r="10" stroke="#dfe3ea" stroke-width="1.500" fill="none"/><path d="M8 11 L10.500 13.500 L15 8" stroke="#dfe3ea" stroke-width="1.500" fill="none"/></svg>
<svg style="left:14.5px;top:262px" width="18" height="18" viewBox="0 0 18 18"><circle cx="9" cy="9" r="8" stroke="#dfe3ea" stroke-width="1.500" fill="none"/></svg>
</div>
<!-- DIALOG -->
<div class="a" style="left:534px;top:273px;width:939px;height:624.5px;background:#fff;box-shadow:0 0 0 1px rgba(20,25,35,.19),0 1px 7px 1px rgba(0,0,0,.2);"></div>
<div class="a" style="left:534px;top:273px;width:939px;height:47.5px;background:#212930;"></div>
<div class="t" style="top:287px;font-size:18px;left:550.5px;color:#fff;font-weight:bold;letter-spacing:0.99px;">Bunker Planning: Estimate ADM-000992</div>
<div class="a" style="left:1384px;top:296px;width:10px;height:3px;background:#fff;"></div>
<svg style="left:1441px;top:291px" width="13" height="13" viewBox="0 0 13 13"><path d="M1.500 1.500 L11.500 11.500 M11.500 1.500 L1.500 11.500" stroke="#fff" stroke-width="3.200" fill="none"/></svg>
<div class="t" style="top:346px;font-size:13px;left:562.9px;color:#7093ad;font-weight:bold;letter-spacing:0.45px;">IFO</div>
<div class="t" style="top:346px;font-size:13px;left:606px;color:#7093ad;font-weight:bold;letter-spacing:0.45px;">LSF</div>
<div class="t" style="top:346px;font-size:13px;left:652px;color:#7093ad;font-weight:bold;letter-spacing:0.45px;">MGO</div>
<div class="t" style="top:346px;font-size:13px;left:704.8px;color:#34566f;font-weight:bold;letter-spacing:0.45px;">LSG</div>
<div class="a" style="left:694px;top:368px;width:49px;height:3px;background:#2f5b7b;"></div>
<div class="t" style="top:415px;font-size:13.75px;left:574px;color:#262626;letter-spacing:0px;">End Quantity</div>
<div class="a" style="left:658px;top:413px;width:108px;height:23px;background:#f0f1f4;border:1px solid #c6cbd8;"></div>
<div class="t" style="top:415px;font-size:13.75px;right:1157.4px;color:#262626;">16.219</div>
<div class="a" style="left:558px;top:375px;width:216px;height:47px;background:#fff;border:3px solid #12a98a;box-shadow:-3px 4px 6px rgba(0,0,0,.36), inset -2px 3px 5px -1px rgba(0,0,0,.36);"></div>
<div class="t" style="top:392px;font-size:13.75px;right:1262.2px;color:#262626;letter-spacing:0px;">Init Quantity</div>
<div class="a" style="left:658px;top:390px;width:108px;height:29px;overflow:hidden"><div class="a" style="left:0px;top:0px;width:108px;height:24px;background:#fff;border:1px solid #c6cbd8;"></div>
<div class="a" style="left:0px;top:23px;width:108px;height:23px;background:#f0f1f4;border:1px solid #c6cbd8;"></div>
</div>
<div class="t" style="top:392px;font-size:13.75px;right:1157.4px;color:#262626;">90.000</div>
<div class="t" style="top:392px;font-size:13.75px;right:1081.7px;color:#262626;letter-spacing:0px;">Init Price</div>
<div class="t" style="top:415px;font-size:13.75px;right:1081.7px;color:#262626;letter-spacing:0px;">End Price</div>
<div class="a" style="left:838px;top:390px;width:108px;height:24px;background:#fff;border:1px solid #c6cbd8;"></div>
<div class="a" style="left:838px;top:413px;width:108px;height:23px;background:#f0f1f4;border:1px solid #c6cbd8;"></div>
<div class="t" style="top:392px;font-size:13.75px;right:977.1px;color:#262626;">0.00</div>
<div class="t" style="top:415px;font-size:13.75px;right:977.1px;color:#262626;">0.00</div>
<div class="t" style="top:392px;font-size:13.75px;left:966.5px;color:#262626;letter-spacing:0px;">Calc Method</div>
<div class="a" style="left:1048px;top:390px;width:123px;height:24px;background:#fff;border:1px solid #c6cbd8;"></div>
<div class="t" style="top:392px;font-size:13.75px;left:1057px;color:#262626;">FIFO</div>
<div class="a" style="left:964px;top:419px;width:15.5px;height:15.5px;background:#fff;border:1px solid #767676;border-radius:3px;"></div>
<div class="t" style="top:417px;font-size:13.75px;left:984.5px;color:#262626;letter-spacing:0px;">Transfer Received When Fixing</div>
<div class="t" style="top:392px;font-size:13.75px;right:646.5px;color:#262626;letter-spacing:0px;">Total Cons</div>
<div class="a" style="left:1273px;top:390px;width:108px;height:24px;background:#f0f1f4;border:1px solid #c6cbd8;"></div>
<div class="t" style="top:392px;font-size:13.75px;right:542.7px;color:#262626;">73.781</div>
<div class="a" style="left:553px;top:458px;width:866px;height:338px;background:#fff;border:1px solid #c6cbd8;"></div>
<div class="a" style="left:554px;top:459px;width:840px;height:21px;background:#e6e7f0;border-bottom:1px solid #c6cbd8;"></div>
<div class="a" style="left:734px;top:459px;width:1px;height:21px;background:#c6cbd8;"></div>
<div class="a" style="left:764px;top:459px;width:1px;height:21px;background:#c6cbd8;"></div>
<div class="a" style="left:869px;top:459px;width:1px;height:21px;background:#c6cbd8;"></div>
<div class="a" style="left:974px;top:459px;width:1px;height:21px;background:#c6cbd8;"></div>
<div class="a" style="left:1079px;top:459px;width:1px;height:21px;background:#c6cbd8;"></div>
<div class="a" style="left:1184px;top:459px;width:1px;height:21px;background:#c6cbd8;"></div>
<div class="a" style="left:1289px;top:459px;width:1px;height:21px;background:#c6cbd8;"></div>
<div class="t" style="top:459px;font-size:13.75px;left:561px;color:#3f4650;letter-spacing:0px;">Port Name</div>
<div class="t" style="top:459px;font-size:13.75px;left:739.7px;color:#3f4650;">F</div>
<div class="t" style="top:459px;font-size:13.75px;right:1055.4px;color:#3f4650;letter-spacing:0px;">Sea Cons</div>
<div class="t" style="top:459px;font-size:13.75px;right:950px;color:#3f4650;letter-spacing:0px;">ROB Arr</div>
<div class="t" style="top:459px;font-size:13.75px;right:845.5px;color:#3f4650;letter-spacing:0px;">Port Cons</div>
<div class="t" style="top:459px;font-size:13.75px;right:740px;color:#3f4650;letter-spacing:0px;">Receive</div>
<div class="t" style="top:459px;font-size:13.75px;right:635px;color:#3f4650;letter-spacing:0px;">Price</div>
<div class="t" style="top:459px;font-size:13.75px;right:529.8px;color:#3f4650;letter-spacing:0px;">ROB Dpt</div>
<div class="a" style="left:554px;top:502.5px;width:840px;height:22.3px;background:#e8eef1;"></div>
<div class="t" style="top:483px;font-size:13.75px;left:559px;color:#1f1f1f;letter-spacing:0px;">AABENRAA</div>
<div class="t" style="top:483px;font-size:13.75px;left:739px;color:#1f1f1f;">C</div>
<div class="t" style="top:483px;font-size:13.75px;right:1053.4px;color:#1f1f1f;">0.000</div>
<div class="t" style="top:483px;font-size:13.75px;right:948.4px;color:#1f1f1f;">0.000</div>
<div class="t" style="top:483px;font-size:13.75px;right:843.2px;color:#1f1f1f;">0.00</div>
<div class="t" style="top:483px;font-size:13.75px;right:528.4px;color:#1f1f1f;">90.000</div>
<div class="t" style="top:506px;font-size:13.75px;left:559px;color:#1f1f1f;letter-spacing:0px;">ENGLISH CHANNEL</div>
<div class="t" style="top:506px;font-size:13.75px;left:739px;color:#1f1f1f;">P</div>
<div class="t" style="top:506px;font-size:13.75px;right:1053.4px;color:#1f1f1f;">0.000</div>
<div class="t" style="top:506px;font-size:13.75px;right:948.4px;color:#1f1f1f;">0.000</div>
<div class="t" style="top:506px;font-size:13.75px;right:843.2px;color:#1f1f1f;">0.00</div>
<div class="t" style="top:506px;font-size:13.75px;right:528.4px;color:#1f1f1f;">0.000</div>
<div class="t" style="top:528px;font-size:13.75px;left:559px;color:#1f1f1f;letter-spacing:0px;">MOROCCO (COUNTRY)</div>
<div class="t" style="top:528px;font-size:13.75px;right:1053.4px;color:#1f1f1f;">73.781</div>
<div class="t" style="top:528px;font-size:13.75px;right:948.4px;color:#1f1f1f;">16.219</div>
<div class="t" style="top:528px;font-size:13.75px;right:843.2px;color:#1f1f1f;">0.00</div>
<div class="t" style="top:528px;font-size:13.75px;right:528.4px;color:#1f1f1f;">16.219</div>
<div class="t" style="top:797px;font-size:13.75px;right:1156.9px;color:#262626;letter-spacing:0px;">Totals</div>
<div class="a" style="left:763px;top:795px;width:108px;height:24px;background:#f0f1f4;border:1px solid #c6cbd8;"></div>
<div class="t" style="top:797px;font-size:13.75px;right:1052.6px;color:#262626;">73.781</div>
<div class="a" style="left:973px;top:795px;width:106px;height:24px;background:#f0f1f4;border:1px solid #c6cbd8;"></div>
<div class="a" style="left:1078px;top:795px;width:108px;height:24px;background:#f0f1f4;border:1px solid #c6cbd8;"></div>
<div class="t" style="top:797px;font-size:13.75px;right:842.2px;color:#262626;">0.000</div>
<div class="t" style="top:797px;font-size:13.75px;right:737.1px;color:#262626;">0.000</div>
<div class="a" style="left:1204px;top:801px;width:15.5px;height:15.5px;background:#fff;border:1px solid #767676;border-radius:3px;"></div>
<div class="t" style="top:799px;font-size:13.75px;left:1224px;color:#262626;letter-spacing:0px;">Disable Backup Fuels</div>
<div class="t" style="top:820px;font-size:13.75px;left:1198.2px;color:#262626;letter-spacing:0px;">Fuel Zone Set</div>
<div class="a" style="left:1288px;top:818px;width:123px;height:23px;background:#fff;border:1px solid #c6cbd8;"></div>
<div class="t" style="top:820px;font-size:13.75px;left:1296.5px;color:#262626;letter-spacing:0px;">Global Default</div>
<div class="a" style="left:559px;top:846px;width:15.5px;height:15.5px;background:#fff;border:1px solid #767676;border-radius:3px;"></div>
<div class="t" style="top:844px;font-size:13.75px;left:579px;color:#262626;letter-spacing:0px;">Optimize Liftings for Cargo:</div>
<div class="a" style="left:763px;top:840px;width:153px;height:24px;background:#f0f1f4;border:1px solid #c6cbd8;"></div>
<div class="a" style="left:559px;top:869px;width:15.5px;height:15.5px;background:#fff;border:1px solid #767676;border-radius:3px;"></div>
<div class="t" style="top:867px;font-size:13.75px;left:579px;color:#262626;letter-spacing:0px;">Use Scrubber</div>
<svg style="left:1215px;top:725px" width="110" height="80" viewBox="0 0 110 80"><defs><filter id="sh" x="-20%" y="-20%" width="140%" height="150%"><feDropShadow dx="-1" dy="3" stdDeviation="1.800" flood-color="#000" flood-opacity=".4"/></filter></defs>
<g filter="url(#sh)"><path d="M95 10.500 L24 61.500" stroke="#12a98a" stroke-width="4.600" stroke-linecap="round" fill="none"/><path d="M13 68.500 L19.500 55.800 L29.200 66.900 Z" fill="#12a98a" stroke="#12a98a" stroke-width="1" stroke-linejoin="round"/></g></svg>
<!-- PAGE SCROLLBARS -->
<div class="a" style="left:1894px;top:0;width:21px;height:970px;background:#f1f1f1"></div>
<div class="a" style="left:1895px;top:21px;width:19px;height:832px;background:#cbcbcb"></div>
<svg style="left:1900px;top:8px" width="10" height="7" viewBox="0 0 10 7"><path d="M0.800 6 L5 1.800 L9.200 6" stroke="#505050" stroke-width="2.200" fill="none"/></svg>
<svg style="left:1900px;top:956px" width="10" height="7" viewBox="0 0 10 7"><path d="M0.800 1 L5 5.200 L9.200 1" stroke="#505050" stroke-width="2.200" fill="none"/></svg>
<div class="a" style="left:0;top:970px;width:1915px;height:21px;background:#f1f1f1"></div>
<div class="a" style="left:21px;top:971px;width:1827px;height:19px;background:#cbcbcb"></div>
<svg style="left:6px;top:976px" width="7" height="10" viewBox="0 0 7 10"><path d="M6 0.800 L1.800 5 L6 9.200" stroke="#505050" stroke-width="2.200" fill="none"/></svg>
<svg style="left:1880px;top:976px" width="7" height="10" viewBox="0 0 7 10"><path d="M1 0.800 L5.200 5 L1 9.200" stroke="#505050" stroke-width="2.200" fill="none"/></svg>
<svg style="left:1900px;top:977px" width="13" height="13" viewBox="0 0 13 13"><g fill="#bdbdbd"><rect x="9" y="0" width="3" height="3"/><rect x="4.500" y="4.500" width="3" height="3"/><rect x="9" y="4.500" width="3" height="3"/><rect x="0" y="9" width="3" height="3"/><rect x="4.500" y="9" width="3" height="3"/><rect x="9" y="9" width="3" height="3"/></g><!--grip--></svg>

</div></body></html>
